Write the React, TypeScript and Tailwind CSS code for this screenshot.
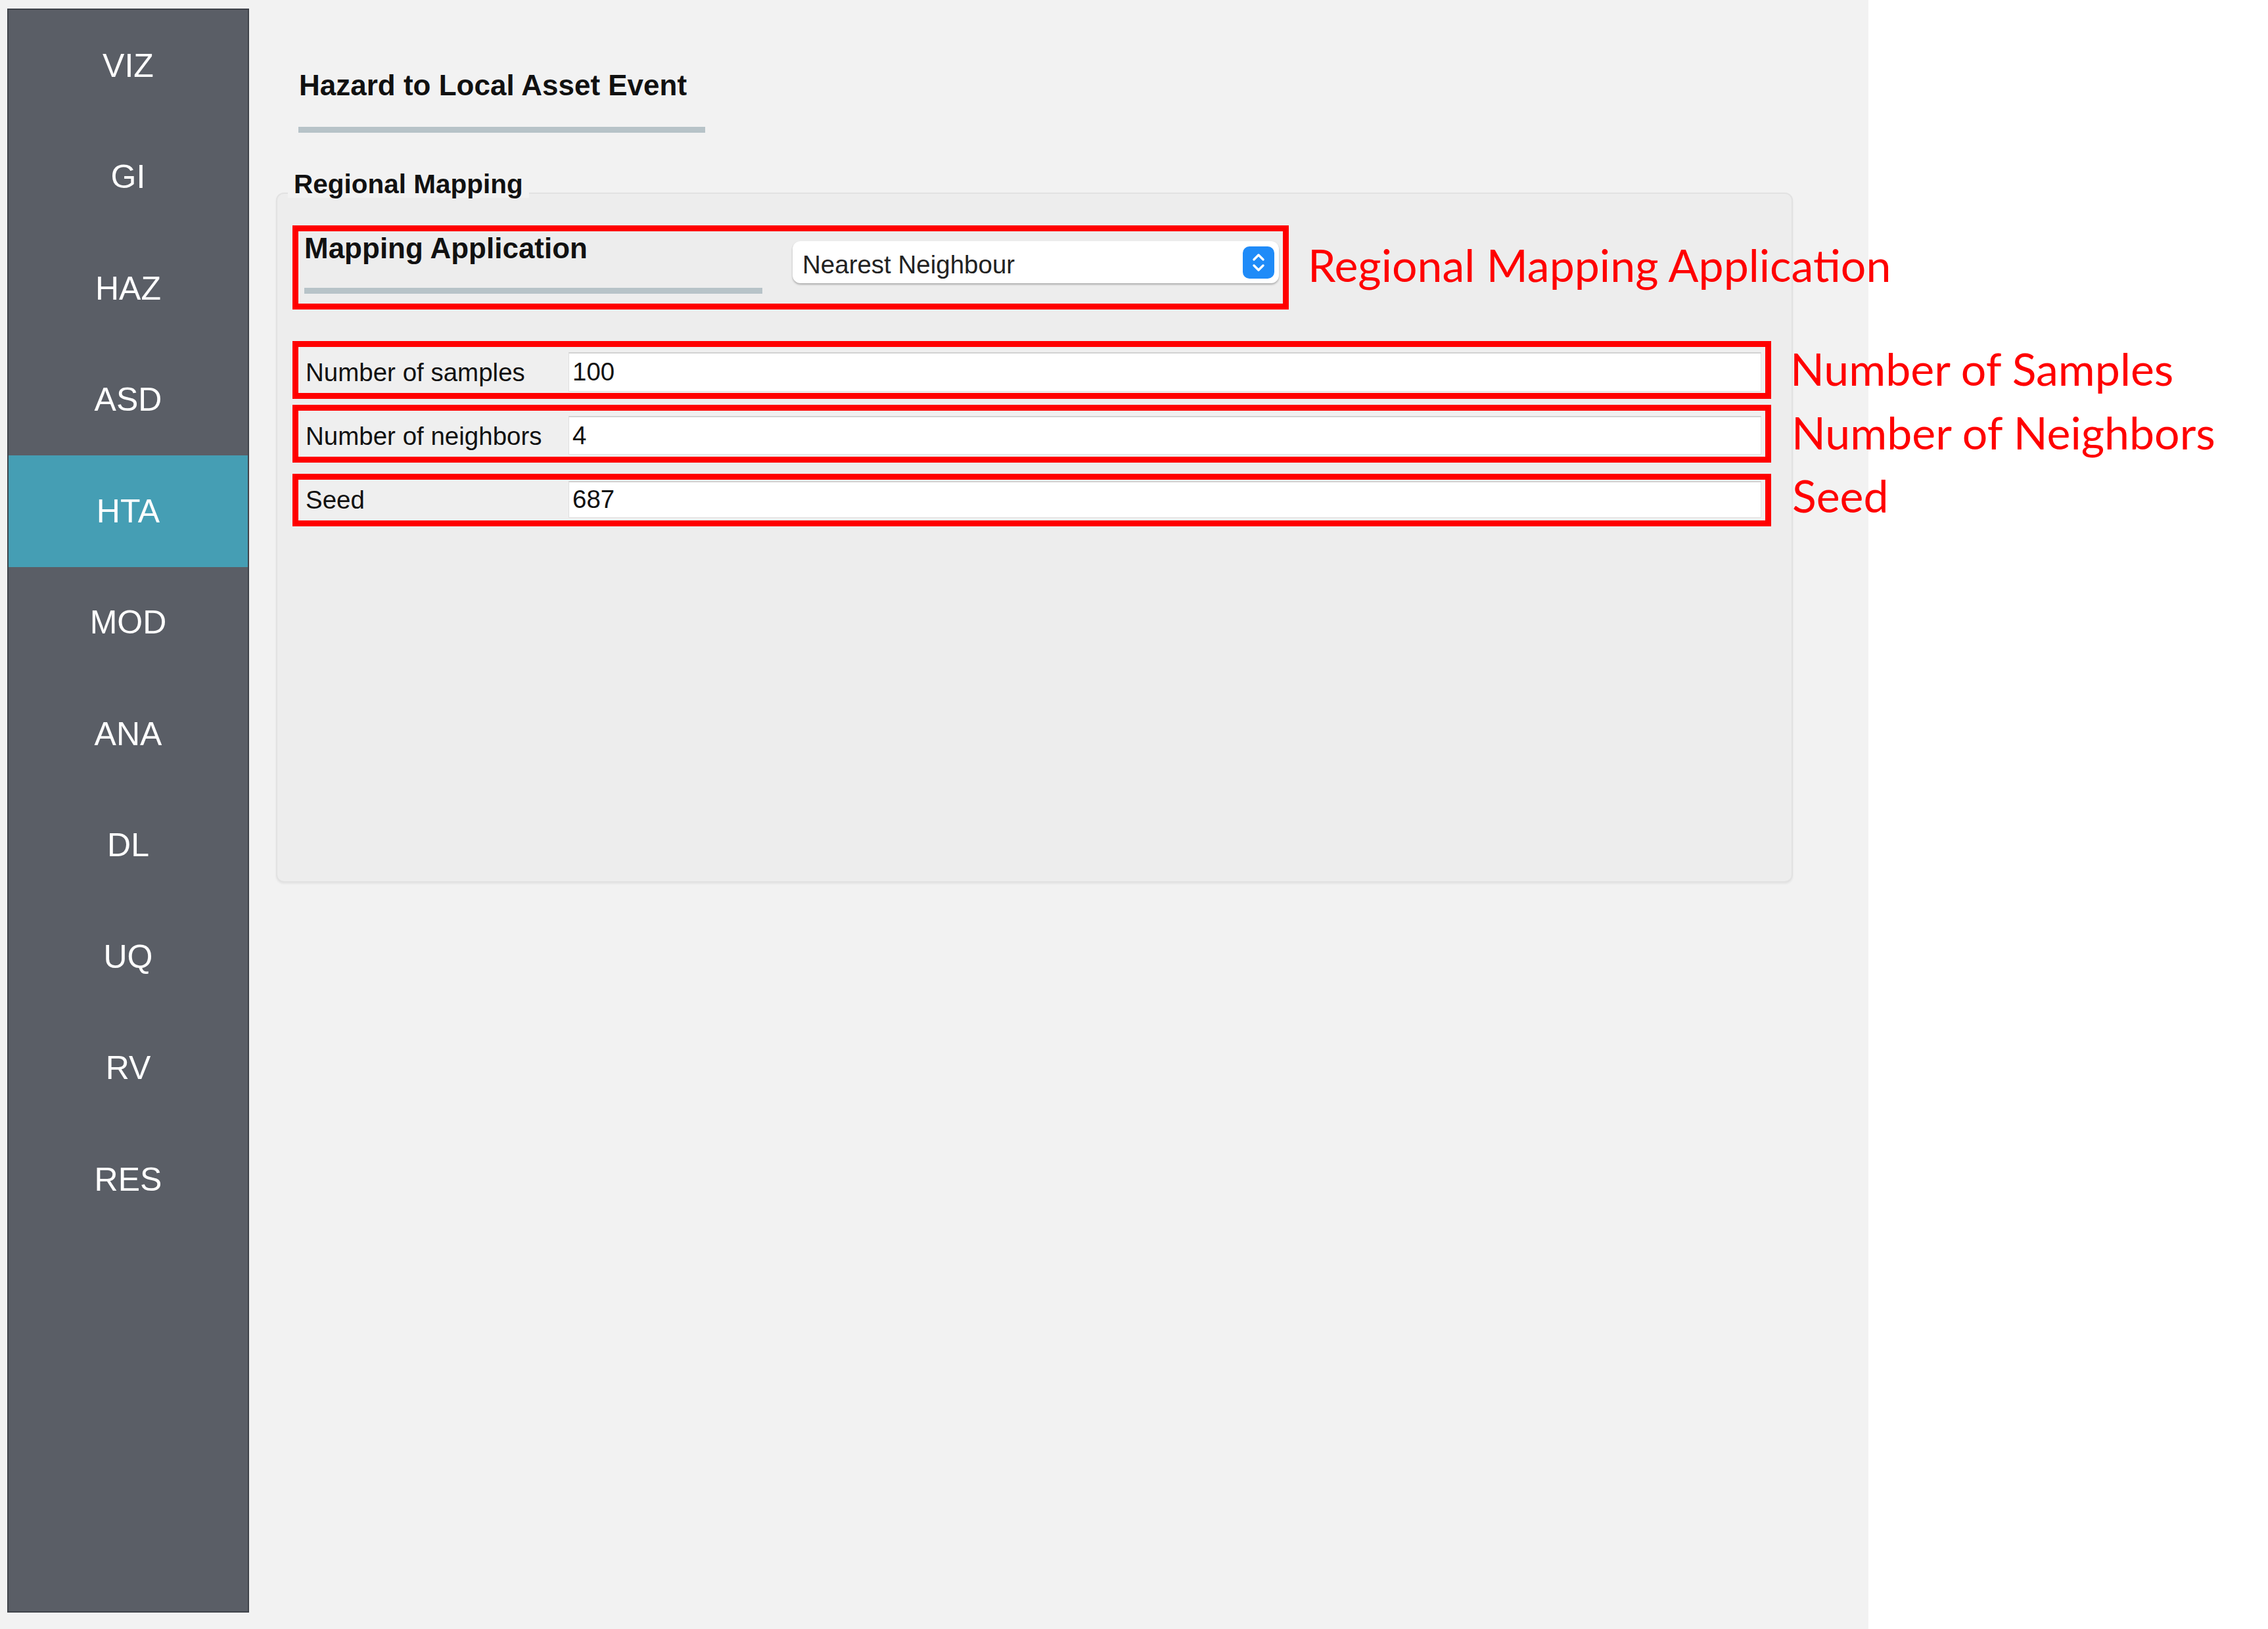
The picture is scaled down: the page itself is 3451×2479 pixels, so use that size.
import React from 'react';

// Left navigation entries
const navItems = ['VIZ', 'GI', 'HAZ', 'ASD', 'HTA', 'MOD', 'ANA', 'DL', 'UQ', 'RV', 'RES'];

const ui = { fontFamily: '"Liberation Sans", Arial, sans-serif' };
const note = { fontFamily: 'Lato, "Open Sans", sans-serif' };

const params = [
  { label: 'Number of samples', value: '100', mt: 'mt-[48px]', h: 'h-[88px]', inMt: 'mt-[8px]', inH: 'h-[60px]', lp: 'pt-[8px]' },
  { label: 'Number of neighbors', value: '4', mt: 'mt-[9px]', h: 'h-[88px]', inMt: 'mt-[8px]', inH: 'h-[59px]', lp: 'pt-[8px]' },
  { label: 'Seed', value: '687', mt: 'mt-[17px]', h: 'h-[80px]', inMt: 'mt-[2px]', inH: 'h-[56px]', lp: 'pt-0' },
];

const Stepper: React.FC = () => (
  <div className="w-[48px] h-[49px] rounded-[10px] bg-[#1f8bf8] flex items-center justify-center">
    <svg width="48" height="49" viewBox="0 0 48 49" fill="none">
      <path d="M17 20 L24 13 L31 20" stroke="white" strokeWidth="3.5" strokeLinecap="round" strokeLinejoin="round" />
      <path d="M17 29 L24 36 L31 29" stroke="white" strokeWidth="3.5" strokeLinecap="round" strokeLinejoin="round" />
    </svg>
  </div>
);

const App: React.FC = () => {
  return (
    <div className="relative w-[3451px] h-[2479px] bg-white overflow-hidden" style={ui}>
      {/* Application window */}
      <div className="w-[2843px] h-full bg-[#f2f2f2] flex items-start pt-[13px] pl-[11px]">
        {/* Sidebar */}
        <div className="w-[368px] h-[2441px] bg-[#5a5e66] border-2 border-[#3f434a] flex flex-col">
          {navItems.map((item) => (
            <div
              key={item}
              className={`h-[169.5px] shrink-0 flex items-center justify-center text-[50px] leading-none text-white ${
                item === 'HTA' ? 'bg-[#459eb4]' : ''
              }`}
            >
              {item}
            </div>
          ))}
        </div>

        {/* Main panel */}
        <div className="ml-[41px] w-[2308px] flex flex-col">
          <div className="mt-[95px] pl-[35px] text-[44px] leading-none font-bold text-[#111]">
            Hazard to Local Asset Event
          </div>
          <div className="mt-[41px] ml-[34px] w-[619px] h-[9px] bg-[#b7c3c8]" />

          <div className="relative z-10 mt-[58px] ml-[18px] px-[9px] w-fit bg-[#f2f2f2] text-[40.5px] leading-none font-bold text-[#111]">
            Regional Mapping
          </div>

          {/* Group box */}
          <div className="-mt-[7.5px] h-[1050px] bg-[#ededed] border-2 border-[#e2e2e2] rounded-[12px] shadow-[0_2px_3px_rgba(0,0,0,0.06)] flex flex-col">
            {/* Mapping application */}
            <div className="ml-[23px] mt-[48px] w-[1516px] h-[128px] border-[9px] border-[#ff0000] flex items-start">
              <div className="w-[706px] pl-[9px] flex flex-col">
                <div className="mt-[4px] text-[44px] leading-none font-bold text-[#111]">Mapping Application</div>
                <div className="mt-[38px] w-[697px] h-[9px] bg-[#b7c3c8]" />
              </div>
              <div className="ml-[46px] mt-[15px] w-[740px] h-[64px] bg-white rounded-[12px] shadow-[0_2px_3px_rgba(0,0,0,0.28)] flex items-center justify-between pl-[15px] pr-[7px]">
                <span className="pt-[8px] text-[38.5px] leading-none text-[#222]">Nearest Neighbour</span>
                <Stepper />
              </div>
            </div>

            {/* Parameters */}
            {params.map((row) => (
              <div
                key={row.label}
                className={`ml-[23px] ${row.mt} w-[2250px] ${row.h} border-[9px] border-[#ff0000] bg-[#efefef] flex items-start`}
              >
                <div className={`w-[411px] pl-[11px] ${row.lp} self-center text-[38.5px] leading-none text-[#111]`}>{row.label}</div>
                <div
                  className={`${row.inMt} ${row.inH} w-[1815px] bg-white border border-[#e0e0e0] border-t-2 border-t-[#d2d2d2] flex items-center pl-[5px] text-[38.5px] leading-none text-[#111]`}
                >
                  {row.value}
                </div>
              </div>
            ))}
          </div>
        </div>
      </div>

      {/* Annotations */}
      <span className="absolute left-[1990px] top-[369px] text-[68px] leading-none text-[#ff0000] whitespace-nowrap" style={note}>
        Regional Mapping Application
      </span>
      <span className="absolute left-[2724px] top-[527px] text-[68px] leading-none text-[#ff0000] whitespace-nowrap" style={note}>
        Number of Samples
      </span>
      <span className="absolute left-[2726px] top-[624px] text-[68px] leading-none text-[#ff0000] whitespace-nowrap" style={note}>
        Number of Neighbors
      </span>
      <span className="absolute left-[2727px] top-[720px] text-[68px] leading-none text-[#ff0000] whitespace-nowrap" style={note}>
        Seed
      </span>
    </div>
  );
};

export default App;
